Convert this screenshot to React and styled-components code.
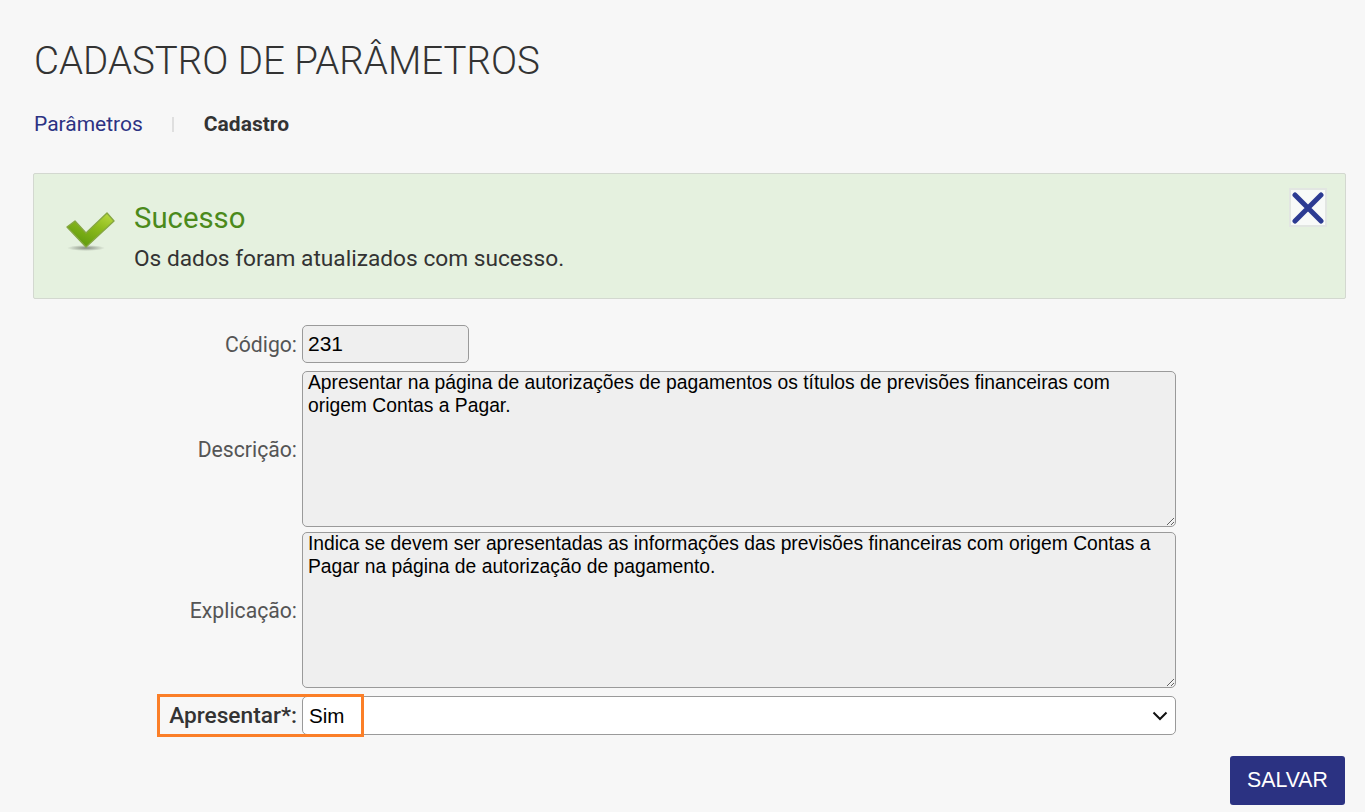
import React from 'react';
import styled, { createGlobalStyle } from 'styled-components';

const GlobalStyle = createGlobalStyle`
  html, body {
    margin: 0;
    height: 100%;
    background-color: #f7f7f7;
    overflow: hidden;
  }
  body {
    font-family: Roboto, "Liberation Sans", sans-serif;
  }
`;

const Wrapper = styled.div`
  padding: 0 19px 0 33px;
`;

const Title = styled.h1`
  margin: 0;
  padding: 39px 0 0 1px;
  height: 44px;
  font-size: 38.5px;
  line-height: 44px;
  font-weight: 300;
  color: #333333;
`;

const Breadcrumb = styled.nav`
  display: flex;
  align-items: center;
  height: 24px;
  margin-top: 29px;
  padding-left: 1px;
  font-size: 21px;
`;

const Crumb = styled.span`
  color: ${(props) => (props.$current ? '#333333' : '#2c3283')};
  font-weight: ${(props) => (props.$current ? 700 : 400)};
`;

const CrumbDivider = styled.span`
  width: 2px;
  height: 15px;
  margin: 0 30px 0 29px;
  background-color: #dfdfdf;
`;

const Alert = styled.div`
  position: relative;
  box-sizing: border-box;
  display: flex;
  align-items: flex-start;
  height: 126px;
  margin-top: 37px;
  padding: 27px 0 0 32px;
  background-color: #e5f1df;
  border: 1px solid #d3d8d0;
  border-radius: 2px;
`;

const AlertIcon = styled.div`
  display: flex;
  margin-top: 10px;
`;

const AlertBody = styled.div`
  margin-left: 18px;
`;

const AlertTitle = styled.div`
  font-size: 29.3px;
  line-height: 34px;
  color: #4b8a1b;
`;

const AlertText = styled.div`
  margin-top: 11px;
  font-size: 22.7px;
  line-height: 26px;
  color: #333333;
`;

const CloseButton = styled.button`
  position: absolute;
  top: 14px;
  right: 18px;
  display: flex;
  align-items: center;
  justify-content: center;
  box-sizing: border-box;
  width: 38px;
  height: 39px;
  padding: 0;
  background-color: #f8faf8;
  border: 2px solid #e2e6e2;
`;

const Form = styled.form`
  position: relative;
  margin-top: 26px;
`;

const Row = styled.div`
  display: grid;
  grid-template-columns: 264px 874px;
  column-gap: 5px;
  align-items: center;
  margin-bottom: ${(props) => props.$gap}px;
`;

const Label = styled.label`
  text-align: right;
  font-size: 21.2px;
  color: ${(props) => (props.$required ? '#333333' : '#555555')};
  font-weight: ${(props) => (props.$required ? 500 : 400)};
`;

const StrongLabel = styled(Label)`
  font-size: 22.7px;
`;

const TextInput = styled.input`
  box-sizing: border-box;
  display: block;
  width: 167px;
  height: 38px;
  padding: 0 5px;
  font-family: "Liberation Sans", Arial, sans-serif;
  font-size: 21px;
  color: #000000;
  background-color: #efefef;
  border: 1px solid #9a9a9a;
  border-radius: 5px;
`;

const TextArea = styled.textarea`
  box-sizing: border-box;
  display: block;
  width: 874px;
  height: 156px;
  padding: 0 10px 0 5px;
  margin: 0;
  font-family: "Liberation Sans", Arial, sans-serif;
  font-size: 19.3px;
  line-height: 22.5px;
  color: #000000;
  background-color: #efefef;
  border: 1px solid #9a9a9a;
  border-radius: 5px;
`;

const SelectBox = styled.div`
  position: relative;
  width: 874px;
  height: 39px;
`;

const Select = styled.select`
  box-sizing: border-box;
  display: block;
  width: 100%;
  height: 100%;
  padding: 0 0 0 6px;
  margin: 0;
  appearance: none;
  font-family: "Liberation Sans", Arial, sans-serif;
  font-size: 20.6px;
  color: #000000;
  background-color: #ffffff;
  border: 1px solid #9a9a9a;
  border-radius: 5px;
`;

const Chevron = styled.svg`
  position: absolute;
  right: 8px;
  top: 15px;
  pointer-events: none;
`;

const Highlight = styled.div`
  position: absolute;
  left: 124px;
  top: 369px;
  box-sizing: border-box;
  width: 207px;
  height: 43px;
  border: 3px solid #fb7f28;
  pointer-events: none;
`;

const Actions = styled.div`
  display: flex;
  justify-content: flex-end;
  margin-top: 21px;
  padding-right: 1px;
`;

const SaveButton = styled.button`
  width: 115px;
  height: 49px;
  padding: 0;
  font-family: "Liberation Sans", Arial, sans-serif;
  font-size: 21.3px;
  color: #ffffff;
  background-color: #2b3282;
  border: none;
  border-radius: 3px;
`;

const CheckIcon = () => (
  <svg width="50" height="42" viewBox="0 0 50 42">
    <defs>
      <linearGradient id="check" x1="0.2" y1="0.9" x2="0.8" y2="0">
        <stop offset="0" stopColor="#5f9a0e" />
        <stop offset="0.6" stopColor="#8dbb1c" />
        <stop offset="1" stopColor="#b4d63c" />
      </linearGradient>
      <radialGradient id="shadow">
        <stop offset="0" stopColor="#5c6158" stopOpacity="0.7" />
        <stop offset="1" stopColor="#5c6158" stopOpacity="0" />
      </radialGradient>
    </defs>
    <ellipse cx="20" cy="37" rx="19" ry="3" fill="url(#shadow)" />
    <path
      d="M1 16 L9 10 L20 22 L41 2 L48 10 L20 36 Z"
      fill="url(#check)"
      stroke="#86a743"
      strokeWidth="1.4"
      strokeLinejoin="round"
    />
  </svg>
);

const CloseIcon = () => (
  <svg width="32" height="32" viewBox="0 0 32 32">
    <path
      d="M3 3 L29 29 M29 3 L3 29"
      stroke="#2c3b92"
      strokeWidth="5"
      strokeLinecap="round"
    />
  </svg>
);

const App = () => {
  return (
    <Wrapper>
      <GlobalStyle />
      <Title>CADASTRO DE PARÂMETROS</Title>
      <Breadcrumb>
        <Crumb>Parâmetros</Crumb>
        <CrumbDivider />
        <Crumb $current>Cadastro</Crumb>
      </Breadcrumb>

      <Alert>
        <AlertIcon>
          <CheckIcon />
        </AlertIcon>
        <AlertBody>
          <AlertTitle>Sucesso</AlertTitle>
          <AlertText>Os dados foram atualizados com sucesso.</AlertText>
        </AlertBody>
        <CloseButton type="button">
          <CloseIcon />
        </CloseButton>
      </Alert>

      <Form>
        <Row $gap={8}>
          <Label>Código:</Label>
          <TextInput defaultValue="231" readOnly />
        </Row>
        <Row $gap={5}>
          <Label>Descrição:</Label>
          <TextArea
            readOnly
            defaultValue="Apresentar na página de autorizações de pagamentos os títulos de previsões financeiras com origem Contas a Pagar."
          />
        </Row>
        <Row $gap={8}>
          <Label>Explicação:</Label>
          <TextArea
            readOnly
            defaultValue="Indica se devem ser apresentadas as informações das previsões financeiras com origem Contas a Pagar na página de autorização de pagamento."
          />
        </Row>
        <Row $gap={0}>
          <StrongLabel $required>Apresentar*:</StrongLabel>
          <SelectBox>
            <Select defaultValue="sim">
              <option value="sim">Sim</option>
              <option value="nao">Não</option>
            </Select>
            <Chevron width="16" height="10" viewBox="0 0 16 10">
              <path d="M1.5 1.5 L8 8 L14.5 1.5" fill="none" stroke="#111111" strokeWidth="2" />
            </Chevron>
          </SelectBox>
        </Row>
        <Highlight />
        <Actions>
          <SaveButton type="button">SALVAR</SaveButton>
        </Actions>
      </Form>
    </Wrapper>
  );
};

export default App;
